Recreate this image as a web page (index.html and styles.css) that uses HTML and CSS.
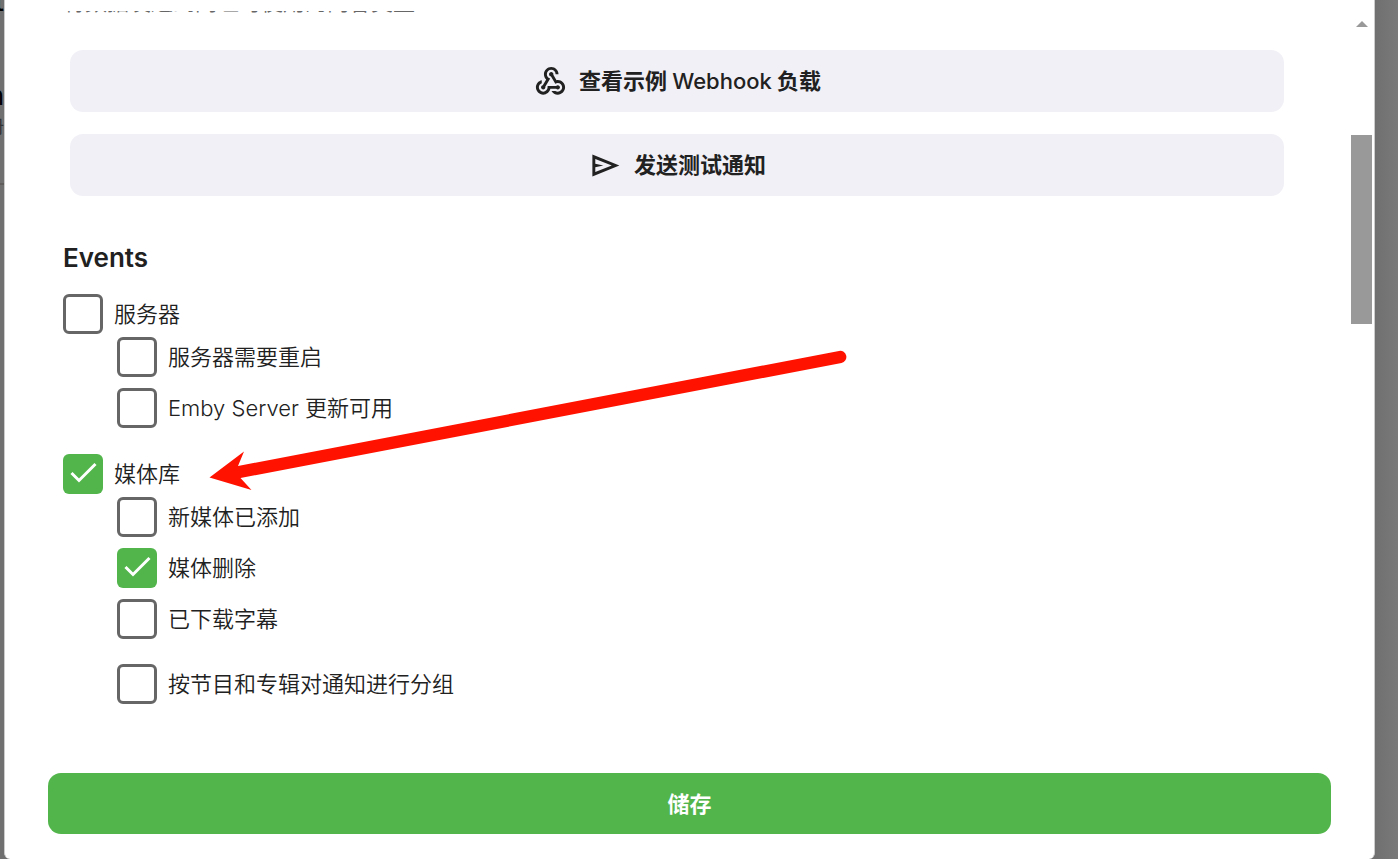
FILE: index.html
```html
<!DOCTYPE html>
<html lang="zh-CN">
<head>
    <meta charset="UTF-8">
    <meta name="viewport" content="width=device-width, initial-scale=1.0">
    <title>Webhook</title>
    <link rel="stylesheet" href="styles.css">
</head>
<body>
    <div class="backdrop" aria-hidden="true">
        <span class="behind-title">t</span>
        <span class="behind-name">n</span>
        <span class="behind-text">册</span>
    </div>
    <form class="dialog">
        <div class="scroller">
            <div class="content">
                <div class="description"><p>将数据发送到网址时使用的内容类型</p></div>
                <div class="actions">
                    <button type="button" class="btn">
                        <svg class="icon" viewBox="0 0 24 24"><path d="M10,15l5.88,0c0.27-0.31,0.67-0.5,1.12-0.5c0.83,0,1.5,0.67,1.5,1.5c0,0.83-0.67,1.5-1.5,1.5c-0.44,0-0.84-0.19-1.12-0.5l-3.98,0c-0.46,2.28-2.48,4-4.9,4c-2.76,0-5-2.24-5-5c0-2.42,1.72-4.44,4-4.9l0,2.07C4.84,13.58,4,14.7,4,16c0,1.65,1.35,3,3,3s3-1.35,3-3V15z M12.5,4c1.65,0,3,1.35,3,3h2c0-2.76-2.24-5-5-5c-2.76,0-5,2.24-5,5c0,1.43,0.6,2.71,1.55,3.62l-2.35,3.9C6.02,14.66,5.5,15.27,5.5,16c0,0.83,0.67,1.5,1.5,1.5c0.83,0,1.5-0.67,1.5-1.5c0-0.16-0.02-0.31-0.07-0.45l3.38-5.63C10.49,9.61,9.5,8.42,9.5,7C9.5,5.35,10.85,4,12.5,4z M17,13c-0.64,0-1.23,0.2-1.72,0.54l-3.05-5.07C11.53,8.35,11,7.74,11,7c0-0.83,0.67-1.5,1.5-1.5S14,6.17,14,7c0,0.15-0.02,0.29-0.06,0.43l2.19,3.65C16.41,11.03,16.7,11,17,11c2.76,0,5,2.24,5,5c0,2.76-2.24,5-5,5c-1.85,0-3.47-1.01-4.33-2.5l2.67,0C15.82,18.82,16.39,19,17,19c1.65,0,3-1.35,3-3S18.65,13,17,13z"/></svg>
                        <span>查看示例 <span class="latin">Webhook</span> 负载</span>
                    </button>
                    <button type="button" class="btn">
                        <svg class="icon" viewBox="0 0 24 24"><path d="M3 19.500V4.500L21.500 12Zm2-3L16.300 12 5 7.500v3.300L10.500 12 5 13.200Z"/></svg>
                        <span>发送测试通知</span>
                    </button>
                </div>

                <h2>Events</h2>
                <div class="group">
                    <div class="check">
                        <input type="checkbox" id="server">
                        <label for="server">服务器</label>
                    </div>
                    <div class="children">
                        <div class="check">
                            <input type="checkbox" id="restart">
                            <label for="restart">服务器需要重启</label>
                        </div>
                        <div class="check">
                            <input type="checkbox" id="update">
                            <label for="update">Emby Server 更新可用</label>
                        </div>
                    </div>
                </div>
                <div class="group">
                    <div class="check">
                        <input type="checkbox" id="library" checked>
                        <label for="library">媒体库</label>
                    </div>
                    <div class="children">
                        <div class="check">
                            <input type="checkbox" id="added">
                            <label for="added">新媒体已添加</label>
                        </div>
                        <div class="check">
                            <input type="checkbox" id="deleted" checked>
                            <label for="deleted">媒体删除</label>
                        </div>
                        <div class="check">
                            <input type="checkbox" id="subtitles">
                            <label for="subtitles">已下载字幕</label>
                        </div>
                        <div class="check option">
                            <input type="checkbox" id="grouping">
                            <label for="grouping">按节目和专辑对通知进行分组</label>
                        </div>
                    </div>
                </div>
            </div>
            <div class="scrollbar" aria-hidden="true">
                <svg class="scroll-up" viewBox="0 0 12 6"><path d="M6 0l6 6H0z"/></svg>
                <div class="thumb"></div>
            </div>
        </div>
        <div class="footer">
            <button type="submit" class="btn btn-save">储存</button>
        </div>
    </form>

    <!-- arrow pointing at the media library option -->
    <svg class="arrow" viewBox="0 0 640 142"><path d="M0.500 129.500L35 103.500L29 118L630 3A6 6 0 0 1 632.500 15L31.500 130L42.500 142Z"/></svg>
</body>
</html>
```
FILE: styles.css
```css
* {
    box-sizing: border-box;
}
body {
    margin: 0;
    min-height: 100vh;
    display: flex;
    padding: 0 23px 0 4px;
    background: linear-gradient(to left, #797979, #707070 23px);
    font-family: Inter, "Noto Sans CJK SC", sans-serif;
    font-size: 22px;
    line-height: 26px;
    color: #212121;
}
/* page left visible beside the dialog */
.backdrop {
    position: absolute;
    left: 0;
    top: 0;
    width: 4px;
    height: 185px;
    overflow: hidden;
    border-bottom: 2px solid #5f5e5d;
    color: #000;
}
.backdrop span {
    position: absolute;
    right: 0;
}
.backdrop .behind-title {
    top: -13px;
    font-size: 30px;
}
.backdrop .behind-name {
    top: 83px;
    font-size: 26px;
}
.backdrop .behind-text {
    top: 114px;
    font-size: 18px;
    color: #333;
}
.dialog {
    flex: 1;
    display: flex;
    flex-direction: column;
    background-color: #fff;
    border: solid #ccc;
    border-width: 0 1px;
    border-radius: 0 0 6px 6px;
}
.scroller {
    flex: 1;
    display: flex;
    padding-top: 11px;
}
.content {
    flex: 1;
    padding: 0 60px 0 58px;
}
.description {
    height: 39px;
    overflow: hidden;
    color: #666;
}
.description p {
    margin: -22px 0 0;
    font-weight: 350;
}
.actions {
    display: flex;
    flex-direction: column;
    gap: 22px;
    padding: 0 7px;
}
.btn {
    display: flex;
    align-items: center;
    justify-content: center;
    gap: 11px;
    width: 100%;
    height: 62px;
    padding: 0;
    border: none;
    border-radius: 13px;
    background-color: #f1f0f6;
    color: #212121;
    font: inherit;
    font-weight: 700;
    cursor: pointer;
}
.latin {
    font-weight: 500;
}
.icon {
    width: 35px;
    height: 35px;
    fill: currentColor;
}
h2 {
    margin: 44px 0 18px;
    font-size: 26px;
    line-height: 36px;
    font-weight: 600;
}
.group {
    margin-bottom: 26px;
}
.check {
    display: flex;
    align-items: center;
    gap: 11px;
    font-weight: 350;
}
.check input {
    appearance: none;
    width: 40px;
    height: 40px;
    margin: 0;
    border: 3px solid #666;
    border-radius: 6px;
}
.check input:checked {
    border: none;
    background: #52b54b url("data:image/svg+xml,%3Csvg xmlns='http://www.w3.org/2000/svg' viewBox='0 0 40 40'%3E%3Cpath d='M8.500 19l7.500 7.500L32.500 10' fill='none' stroke='white' stroke-width='3'/%3E%3C/svg%3E");
}
.children {
    display: flex;
    flex-direction: column;
    gap: 11px;
    margin: 3px 0 0 54px;
}
.option {
    margin-top: 14px;
}
.scrollbar {
    display: flex;
    flex-direction: column;
    align-items: center;
    width: 21px;
    margin-right: 2px;
    padding-top: 10px;
}
.scroll-up {
    width: 12px;
    height: 6px;
    fill: #999;
}
.thumb {
    width: 100%;
    height: 189px;
    margin-top: 108px;
    background-color: #999;
}
.footer {
    padding: 0 43px 25px;
}
.btn-save {
    height: 61px;
    background-color: #52b54b;
    color: #fff;
}
.arrow {
    position: absolute;
    left: 209px;
    top: 348px;
    width: 640px;
    height: 142px;
    fill: #ff1200;
    pointer-events: none;
}
```
